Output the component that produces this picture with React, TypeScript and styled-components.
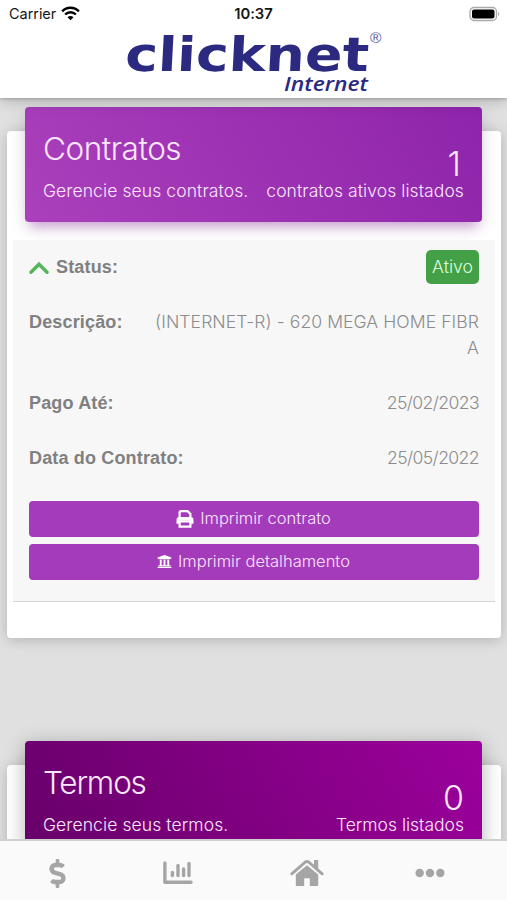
import React from "react";
import styled, { createGlobalStyle } from "styled-components";
import { FaUniversity, FaDollarSign, FaEllipsisH } from "react-icons/fa";

const GlobalStyle = createGlobalStyle`
  * { box-sizing: border-box; }
  body { margin: 0; background: #e0e0e0; font-family: Inter, "Liberation Sans", sans-serif; }
  h2, p, dl, dt, dd { margin: 0; font: inherit; }
`;

const Screen = styled.div`
  display: flex;
  flex-direction: column;
  width: 100%;
  height: 900px;
  overflow: hidden;
  background: #e0e0e0;
`;

const TopBar = styled.header`
  position: relative;
  z-index: 2;
  flex: none;
  height: 98px;
  background: #fff;
  box-shadow: 0 1px 3px rgba(0, 0, 0, 0.2), 0 3px 13px rgba(0, 0, 0, 0.2);
`;

const StatusBar = styled.div`
  display: grid;
  grid-template-columns: 1fr auto 1fr;
  align-items: center;
  height: 28px;
  padding: 0 7px 1px 9px;
  font-size: 14.5px;
  letter-spacing: -0.05px;
  color: #161616;
`;

const Carrier = styled.div`
  display: flex;
  align-items: center;
  gap: 5px;
`;

const Clock = styled.span`
  font-weight: 600;
  font-size: 14.8px;
  margin-right: 2px;
`;

const Battery = styled.svg`
  justify-self: end;
`;

const Logo = styled.svg`
  display: block;
  margin: 0 auto;
`;

const Content = styled.main`
  flex: 1;
  min-height: 0;
  overflow: hidden;
  display: flex;
  flex-direction: column;
  gap: 127px;
  padding: 33px 6px 0 7px;
`;

const Card = styled.section<{ $height: number }>`
  flex: none;
  height: ${(p) => p.$height}px;
  padding: 0 6px;
  border-radius: 4px;
  background: #fff;
  box-shadow: 0 2px 14px rgba(0, 0, 0, 0.2);
`;

const Banner = styled.div<{ $tone: "violet" | "plum" }>`
  display: flex;
  justify-content: space-between;
  height: 115px;
  margin: -24px 13px 18px 12px;
  padding: 22px 18px 0;
  border-radius: 4px;
  color: #fbe6ff;
  background: ${(p) =>
    p.$tone === "violet"
      ? "linear-gradient(60deg, #ab40bc, #8e24aa)"
      : "linear-gradient(60deg, #670069, #9c009c)"};
  box-shadow: ${(p) =>
    p.$tone === "violet"
      ? "0 4px 20px rgba(0, 0, 0, 0.1), 0 9px 12px -5px rgba(156, 39, 176, 0.4)"
      : "0 4px 20px rgba(0, 0, 0, 0.3)"};
`;

const BannerSide = styled.div<{ $end?: boolean }>`
  display: flex;
  flex-direction: column;
  white-space: nowrap;
  align-items: ${(p) => (p.$end ? "flex-end" : "flex-start")};
`;

const Title = styled.h2<{ $tracking: number }>`
  height: 49px;
  font-size: 31.5px;
  font-weight: 300;
  line-height: 39px;
  letter-spacing: ${(p) => p.$tracking}px;
`;

const Count = styled.div<{ $inset?: number }>`
  height: 49px;
  padding-top: 20px;
  padding-right: ${(p) => p.$inset ?? 0}px;
  font-size: 34px;
  font-weight: 300;
  line-height: 29px;
`;

const Caption = styled.p<{ $tracking?: number }>`
  padding-top: 3px;
  font-size: 17.5px;
  font-weight: 300;
  line-height: 20px;
  letter-spacing: ${(p) => p.$tracking ?? 0}px;
`;

const Panel = styled.div`
  height: 362px;
  padding: 0 16px;
  border-bottom: 1px solid #d6d6d6;
  background: #f7f7f7;
`;

const Row = styled.div`
  display: flex;
  justify-content: space-between;
  align-items: flex-start;
  padding: 14px 0 15px;
  line-height: 26px;
  font-size: 17.6px;
  color: #8c8c8c;
  &:first-child { height: 55px; }
`;

const Label = styled.dt`
  display: flex;
  flex: none;
  align-items: center;
  gap: 7px;
  white-space: nowrap;
  font-family: "Liberation Sans", Arial, sans-serif;
  font-size: 18px;
  font-weight: 700;
  letter-spacing: 0.16px;
  color: #808080;
`;

const Value = styled.dd<{ $tracking: number }>`
  text-align: right;
  font-weight: 300;
  letter-spacing: ${(p) => p.$tracking}px;
`;

const Badge = styled.span`
  display: flex;
  align-items: center;
  justify-content: center;
  width: 53px;
  height: 34px;
  margin-top: -4px;
  border-radius: 5px;
  background: #43a047;
  color: #ddffdd;
  font-weight: 300;
`;

const Actions = styled.div`
  display: grid;
  gap: 6.5px;
  padding-top: 14.5px;
`;

const ActionButton = styled.button`
  display: flex;
  align-items: center;
  justify-content: center;
  gap: 6px;
  height: 36.5px;
  border: 0;
  padding: 0 1px 2px 0;
  border-radius: 4px;
  background: #a43bba;
  color: #fce2ff;
  font: 300 16.5px/24px Inter, sans-serif;
  svg { color: #fff; position: relative; top: 1px; }
`;

const TabBar = styled.nav`
  position: relative;
  z-index: 2;
  flex: none;
  display: grid;
  grid-template-columns: 115px 125px 133px 114px;
  height: 61px;
  border-top: 2px solid #d0d0d0;
  background: #fafafa;
`;

const Tab = styled.a`
  display: flex;
  align-items: center;
  justify-content: center;
  padding-top: 5px;
  color: #a5a5a5;
`;

const WifiIcon = () => (
  <svg width="19" height="15" viewBox="0 0 19 15" fill="none" stroke="#000" strokeWidth="2.4">
    <path d="M1.1 5.3C5.8.5 13.2.5 17.9 5.3" />
    <path d="M4.1 8.5C7.2 5.5 11.8 5.5 14.9 8.5" />
    <path d="M9.5 14.2L6.5 11.2C8.2 9.7 10.8 9.7 12.5 11.2Z" fill="#000" stroke="none" />
  </svg>
);

const PrinterIcon = () => (
  <svg width="18" height="18" viewBox="0 0 18 18" fill="none" stroke="currentColor" strokeWidth="2.2">
    <path d="M3.6 8V2.4Q3.6 1.2 4.8 1.2H11.6L14.4 4V8" />
    <path d="M0.5 13.8V9.8Q.5 7 3.3 7H14.7Q17.5 7 17.5 9.8V13.8H14.5V10.8H3.5V13.8Z" fill="currentColor" stroke="none" />
    <path d="M3.6 11.5H14.4V16.7H3.6Z" />
  </svg>
);

const ChartIcon = () => (
  <svg width="30" height="24" viewBox="0 0 30 24" fill="none" stroke="currentColor" strokeLinecap="round">
    <path d="M1.9 1.9V21.2H28" strokeWidth="3.4" strokeLinejoin="round" />
    <path d="M9.4 11.5V14.5M15 4.5V14.5M20.6 8V14.5M26 2.5V14.5" strokeWidth="3.4" />
  </svg>
);

const HomeIcon = () => (
  <svg width="34" height="28" viewBox="0 0 34 28" fill="currentColor">
    <path d="M1.8 14.8L15.2 3.2Q17 1.8 18.8 3.2L32.2 14.8" fill="none" stroke="currentColor" strokeWidth="2.9" strokeLinecap="round" />
    <path d="M24 1H28.2V11L24 7.5Z" />
    <path d="M5.8 15.6L17 6.3L28.2 15.6V26.2Q28.2 27 27.4 27H19.8V19.2H14.2V27H6.6Q5.8 27 5.8 26.2Z" />
  </svg>
);

export default function App() {
  return (
    <>
      <GlobalStyle />
      <Screen>
        <TopBar>
          <StatusBar>
            <Carrier>Carrier <WifiIcon /></Carrier>
            <Clock>10:37</Clock>
            <Battery width="31" height="16" viewBox="0 0 31 16">
              <rect x="1" y="1.5" width="26.5" height="13" rx="4" fill="#fff" stroke="#aaa" strokeWidth="1.3" />
              <rect x="3" y="3.5" width="22.5" height="9" rx="2" fill="#000" />
              <path d="M29 6Q31.5 8 29 10Z" fill="#aaa" />
            </Battery>
          </StatusBar>
          <Logo width="262" height="68" viewBox="0 0 262 68">
            <g fill="#2b2a80">
              <text transform="translate(1.5 43) skewX(-3) scale(1.155 1)" fontFamily="DejaVu Sans" fontWeight="700" fontSize="47.5" textLength="211" lengthAdjust="spacingAndGlyphs">clicknet</text>
              <text x="161" y="63" fontFamily="Open Sans" fontWeight="600" fontStyle="italic" fontSize="20.5" textLength="84" lengthAdjust="spacingAndGlyphs">Internet</text>
              <text x="247" y="15" fontFamily="Liberation Sans" fontSize="15.5" opacity=".8">®</text>
            </g>
          </Logo>
        </TopBar>
        <Content>
          <Card $height={507}>
            <Banner $tone="violet">
              <BannerSide>
                <Title $tracking={-0.45}>Contratos</Title>
                <Caption $tracking={0.1}>Gerencie seus contratos.</Caption>
              </BannerSide>
              <BannerSide $end>
                <Count $inset={3}>1</Count>
                <Caption $tracking={0.08}>contratos ativos listados</Caption>
              </BannerSide>
            </Banner>
            <Panel>
              <dl>
                <Row>
                  <Label>
                    <svg width="20" height="14" viewBox="0 0 20 14" fill="none" stroke="#55b559" strokeWidth="3.4" strokeLinecap="round">
                      <path d="M2 12.2L10 4.2L18 12.2" />
                    </svg>
                    Status:
                  </Label>
                  <Badge>Ativo</Badge>
                </Row>
                <Row>
                  <Label>Descrição:</Label>
                  <Value $tracking={0.06}>(INTERNET-R) - 620 MEGA HOME FIBR<br />A</Value>
                </Row>
                <Row>
                  <Label>Pago Até:</Label>
                  <Value $tracking={-0.6}>25/02/2023</Value>
                </Row>
                <Row>
                  <Label>Data do Contrato:</Label>
                  <Value $tracking={-0.6}>25/05/2022</Value>
                </Row>
              </dl>
              <Actions>
                <ActionButton><PrinterIcon />Imprimir contrato</ActionButton>
                <ActionButton><FaUniversity size={15} />Imprimir detalhamento</ActionButton>
              </Actions>
            </Panel>
          </Card>
          <Card $height={200}>
            <Banner $tone="plum">
              <BannerSide>
                <Title $tracking={-1.2}>Termos</Title>
                <Caption $tracking={0.1}>Gerencie seus termos.</Caption>
              </BannerSide>
              <BannerSide $end>
                <Count>0</Count>
                <Caption>Termos listados</Caption>
              </BannerSide>
            </Banner>
          </Card>
        </Content>
        <TabBar>
          <Tab><FaDollarSign size={29} /></Tab>
          <Tab><ChartIcon /></Tab>
          <Tab><HomeIcon /></Tab>
          <Tab><FaEllipsisH size={30} /></Tab>
        </TabBar>
      </Screen>
    </>
  );
}
